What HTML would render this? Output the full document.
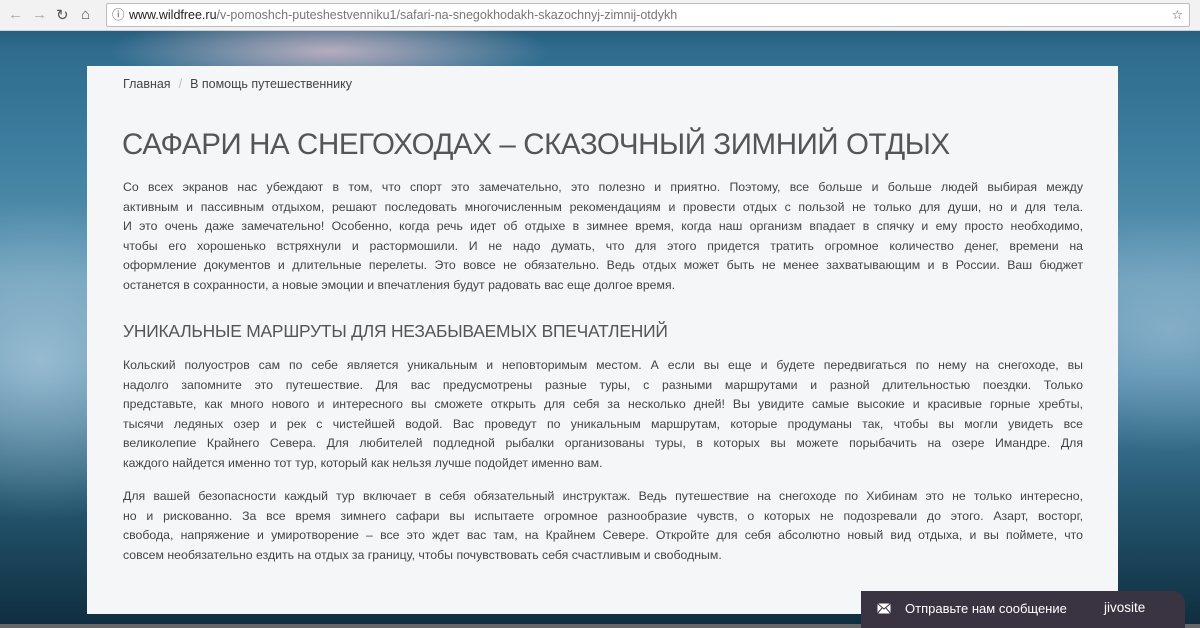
<!DOCTYPE html>
<html><head><meta charset="utf-8"><style>
*{margin:0;padding:0;box-sizing:border-box}
body{width:1200px;height:628px;overflow:hidden;position:relative;font-family:"Liberation Sans",sans-serif;
background:linear-gradient(180deg,#1d4a6a 0%,#2f6c8e 8%,#3f7fa0 25%,#5f97b4 45%,#4a86a6 60%,#24566f 80%,#0f2c3e 100%);}
.bar{position:absolute;left:0;top:0;width:1200px;height:31px;background:#f2f2f2;border-bottom:1px solid #d0d0d0}
.url{position:absolute;left:106px;top:3px;width:1084px;height:24px;background:#fff;border:1px solid #bdbdbd;border-radius:2px;font-size:12.5px;line-height:22px;padding-left:22px;color:#777}
.url b{font-weight:normal;color:#222}
.nav{position:absolute;top:6px;font-size:15px;color:#aaa}
.glow{position:absolute;left:0;top:31px;width:1200px;height:597px;
background:radial-gradient(ellipse 220px 40px at 330px 20px,rgba(240,200,210,.7),transparent),
radial-gradient(ellipse 200px 160px at 40px 330px,rgba(200,220,235,.6),transparent),
radial-gradient(ellipse 200px 120px at 1170px 300px,rgba(180,205,225,.5),transparent)}
.panel{position:absolute;left:87px;top:66px;width:1031px;height:548px;background:#f5f6f8}
.bc{position:absolute;left:36px;top:11px;font-size:12.5px;color:#444}
.bc span{color:#bbb;margin:0 8px}
h1{position:absolute;left:35px;top:62px;font-weight:300;font-size:29.5px;color:#555;letter-spacing:-.4px;white-space:nowrap}
h2{position:absolute;left:36px;top:255px;font-weight:normal;font-size:17.4px;color:#555;white-space:nowrap;letter-spacing:-.2px}
.p{position:absolute;left:36px;width:960px;font-size:12.3px;color:#444;line-height:19.6px}
.p div{text-align:justify;text-align-last:justify;white-space:nowrap;height:19.6px}
.p div.l{text-align-last:left}
.jivo{position:absolute;left:861px;top:591px;width:324px;height:37px;background:#3a3341;border-top-right-radius:12px;color:#fff;font-size:13px}
.bot{position:absolute;left:0;top:624px;width:1200px;height:4px;background:#666}
</style></head><body>
<div class="glow"></div>
<div class="bar">
<span class="nav" style="left:8px">←</span><span class="nav" style="left:32px">→</span>
<span class="nav" style="left:56px;color:#555">↻</span><span class="nav" style="left:81px;color:#555">⌂</span>
<div class="url"><span style="position:absolute;left:5px;color:#555">ⓘ</span><b>www.wildfree.ru</b>/v-pomoshch-puteshestvenniku1/safari-na-snegokhodakh-skazochnyj-zimnij-otdykh<span style="position:absolute;right:6px;color:#555">☆</span></div>
</div>
<div class="panel">
<div class="bc">Главная<span>/</span>В помощь путешественнику</div>
<h1>САФАРИ НА СНЕГОХОДАХ – СКАЗОЧНЫЙ ЗИМНИЙ ОТДЫХ</h1>
<div class="p" style="top:112px">
<div>Со всех экранов нас убеждают в том, что спорт это замечательно, это полезно и приятно. Поэтому, все больше и больше людей выбирая между</div>
<div>активным и пассивным отдыхом, решают последовать многочисленным рекомендациям и провести отдых с пользой не только для души, но и для тела.</div>
<div>И это очень даже замечательно! Особенно, когда речь идет об отдыхе в зимнее время, когда наш организм впадает в спячку и ему просто необходимо,</div>
<div>чтобы его хорошенько встряхнули и растормошили. И не надо думать, что для этого придется тратить огромное количество денег, времени на</div>
<div>оформление документов и длительные перелеты. Это вовсе не обязательно. Ведь отдых может быть не менее захватывающим и в России. Ваш бюджет</div>
<div class="l">останется в сохранности, а новые эмоции и впечатления будут радовать вас еще долгое время.</div>
</div>
<h2>УНИКАЛЬНЫЕ МАРШРУТЫ ДЛЯ НЕЗАБЫВАЕМЫХ ВПЕЧАТЛЕНИЙ</h2>
<div class="p" style="top:290px">
<div>Кольский полуостров сам по себе является уникальным и неповторимым местом. А если вы еще и будете передвигаться по нему на снегоходе, вы</div>
<div>надолго запомните это путешествие. Для вас предусмотрены разные туры, с разными маршрутами и разной длительностью поездки. Только</div>
<div>представьте, как много нового и интересного вы сможете открыть для себя за несколько дней! Вы увидите самые высокие и красивые горные хребты,</div>
<div>тысячи ледяных озер и рек с чистейшей водой. Вас проведут по уникальным маршрутам, которые продуманы так, чтобы вы могли увидеть все</div>
<div>великолепие Крайнего Севера. Для любителей подледной рыбалки организованы туры, в которых вы можете порыбачить на озере Имандре. Для</div>
<div class="l">каждого найдется именно тот тур, который как нельзя лучше подойдет именно вам.</div>
</div>
<div class="p" style="top:421px">
<div>Для вашей безопасности каждый тур включает в себя обязательный инструктаж. Ведь путешествие на снегоходе по Хибинам это не только интересно,</div>
<div>но и рискованно. За все время зимнего сафари вы испытаете огромное разнообразие чувств, о которых не подозревали до этого. Азарт, восторг,</div>
<div>свобода, напряжение и умиротворение – все это ждет вас там, на Крайнем Севере. Откройте для себя абсолютно новый вид отдыха, и вы поймете, что</div>
<div class="l">совсем необязательно ездить на отдых за границу, чтобы почувствовать себя счастливым и свободным.</div>
</div>
</div>
<div class="bot"></div>
<div class="jivo">
<svg style="position:absolute;left:16px;top:12px" width="14" height="11" viewBox="0 0 14 11"><rect x="0.5" y="0.5" width="13" height="10" fill="#fff"/><path d="M0.5 0.5L7 6L13.5 0.5M0.5 10.5L5 5M13.5 10.5L9 5" stroke="#3a3341" fill="none"/></svg>
<span style="position:absolute;left:44px;top:10px">Отправьте нам сообщение</span>
<span style="position:absolute;left:243px;top:9px;font-size:13.5px">jivosite</span>
</div>
</body></html>
